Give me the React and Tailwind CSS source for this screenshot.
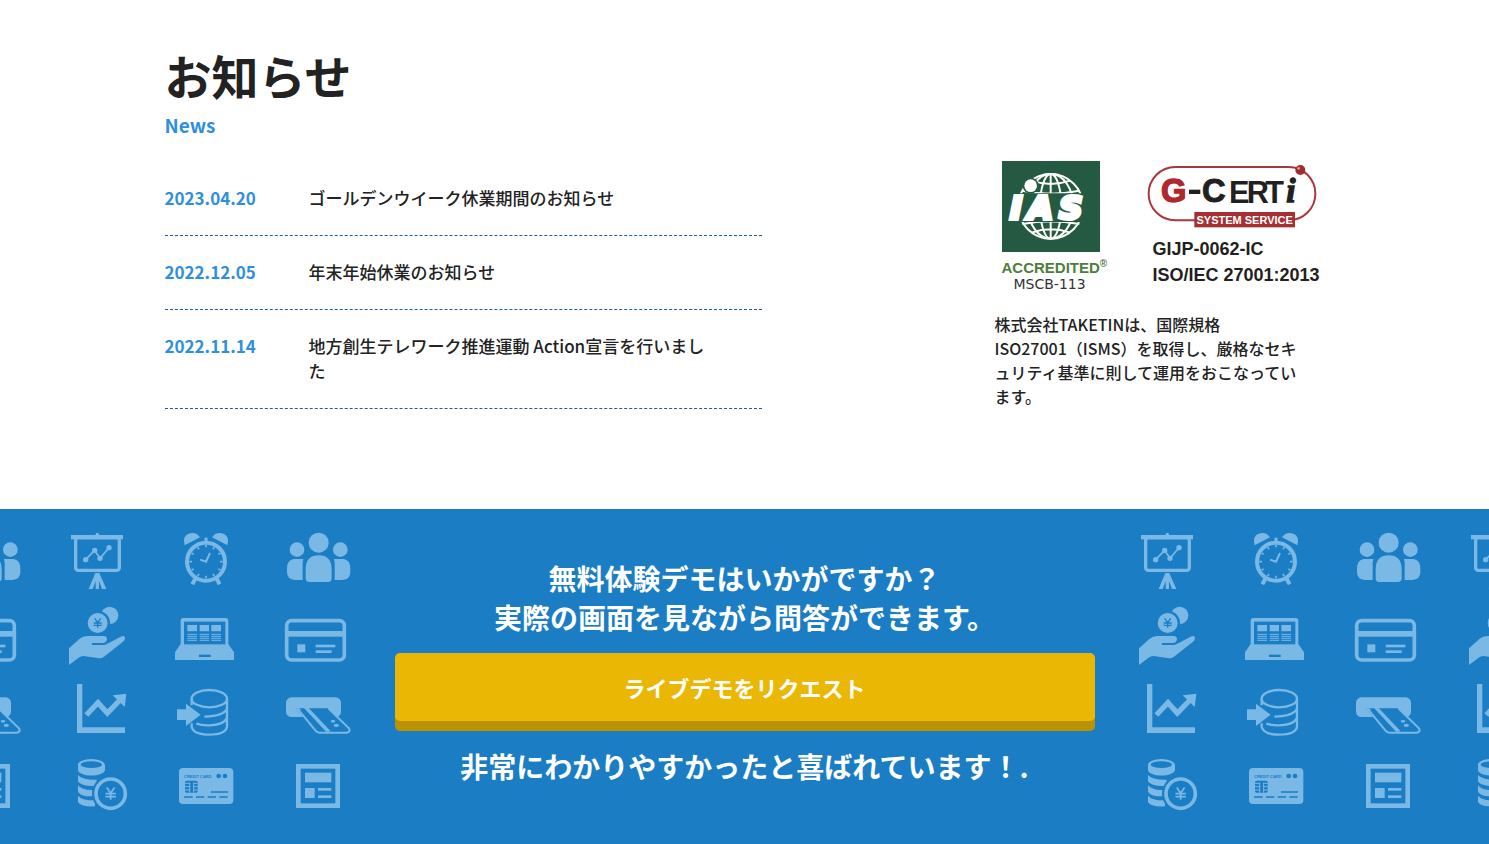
import React from "react";

const news = [
  { date: "2023.04.20", title: "ゴールデンウイーク休業期間のお知らせ" },
  { date: "2022.12.05", title: "年末年始休業のお知らせ" },
  { date: "2022.11.14", title: "地方創生テレワーク推進運動 Action宣言を行いました" },
];

const LIGHT = "#7ab8e6";
const BLUE = "#1b7dc3";

const Yen = ({ x, y, s, color }) => (
  <path
    transform={`translate(${x} ${y}) scale(${s})`}
    d="M-9 -14 L0 -1 L9 -14 M0 -1 V14 M-12 0 H12 M-12 7 H12"
    fill="none"
    stroke={color}
    strokeWidth="4"
  />
);

/* One repeat of the icon wallpaper, 3 columns x 4 rows */
const IconTile = () => (
  <svg
    width="330"
    height="335"
    viewBox="120 0 990 1005"
    fill={LIGHT}
    className="shrink-0"
    aria-hidden="true"
  >
    {/* presentation board */}
    <circle cx="292" cy="76" r="5" />
    <rect x="213" y="78" width="156" height="13" />
    <rect x="227" y="86" width="131" height="98" rx="8" fill="none" stroke={LIGHT} strokeWidth="10" />
    <path d="M257 152 L284 124 L300 148 L327 116" fill="none" stroke={LIGHT} strokeWidth="5" />
    <circle cx="257" cy="152" r="8" />
    <circle cx="284" cy="124" r="8" />
    <circle cx="300" cy="148" r="8" />
    <circle cx="327" cy="116" r="8" />
    <path d="M286 192 H298 L319 240 H306 L297 216 V240 H287 V216 L278 240 H266 Z" />

    {/* hand with coins */}
    <circle cx="329" cy="319" r="26" />
    <circle cx="293" cy="342" r="37" fill={BLUE} />
    <circle cx="293" cy="342" r="30" />
    <Yen x={293} y={342} s={1} color={BLUE} />
    <path d="M207 418 L238 390 Q248 381 262 381 H312 Q321 382 321 391 Q321 397 316 401 L325 403 L362 383 Q375 378 375 388 Q375 394 369 398 L312 443 Q303 450 292 447 L250 441 Q242 441 236 446 L207 468 Z" />
    <path d="M278 405 H309 Q320 405 324 396" fill="none" stroke={BLUE} strokeWidth="6" strokeLinecap="round" />

    {/* line chart */}
    <g transform="translate(0 501)">
      <path d="M231 24 H247 V154 H375 V171 H231 Z" />
      <path d="M259 117 L294 80 L322 111 L360 72" fill="none" stroke={LIGHT} strokeWidth="16" />
      <path d="M379 53 L338 58 L374 93 Z" />
    </g>

    {/* coin stack */}
    <g transform="translate(0 501)">
      <path d="M234 266 V282 C236 304 312 304 315 282 V266 Z" />
      <ellipse cx="274" cy="266" rx="40" ry="17" />
      <ellipse cx="274" cy="266" rx="32" ry="10" fill={BLUE} />
      <path d="M234 297 Q246 312 290 311 V330 Q242 332 234 316 Z" />
      <path d="M234 328 Q246 343 278 342 V361 Q242 362 234 347 Z" />
      <path d="M234 359 Q246 374 285 373 V391 Q242 393 234 378 Z" />
      <circle cx="332" cy="353" r="56" fill={BLUE} />
      <circle cx="332" cy="353" r="44" fill="none" stroke={LIGHT} strokeWidth="11" />
      <Yen x={332} y={353} s={1.3} color={LIGHT} />
    </g>

    <g transform="translate(495 0)">
      {/* alarm clock */}
      <circle cx="123" cy="158" r="57" fill="none" stroke={LIGHT} strokeWidth="12" />
      <path d="M59 109 Q51 84 69 75 Q92 65 105 85 Z" />
      <path d="M187 109 Q195 84 177 75 Q154 65 141 85 Z" />
      <path d="M123 86 V104" stroke={LIGHT} strokeWidth="9" />
      <path d="M92 208 L82 226 M154 208 L164 226" stroke={LIGHT} strokeWidth="12" />
      <path
        d="M123 108 V115 M123 200 V208 M73 158 H81 M165 158 H173 M98 115 L102 121 M148 115 L144 121 M80 133 L86 136 M166 133 L160 136 M80 183 L86 180 M166 183 L160 180 M98 201 L102 195 M148 201 L144 195"
        stroke={LIGHT}
        strokeWidth="5"
      />
      <path d="M105 152 L123 158 L135 132" fill="none" stroke={LIGHT} strokeWidth="6" />

      {/* people */}
      <circle cx="461" cy="101" r="30" />
      <circle cx="396" cy="122" r="22" />
      <circle cx="526" cy="122" r="22" />
      <path d="M422 178 Q424 139 461 139 Q498 139 500 178 V208 Q500 219 489 219 H433 Q422 219 422 208 Z" />
      <path d="M386 150 H415 Q412 160 413 175 V213 H390 Q366 212 366 190 V178 Q366 154 386 150 Z" />
      <path d="M536 150 H507 Q510 160 509 175 V213 H532 Q556 212 556 190 V178 Q556 154 536 150 Z" />

      {/* laptop */}
      <path d="M55 327 H182 Q190 327 190 335 V405 L207 430 V453 H30 V430 L47 405 V335 Q47 327 55 327 Z" />
      <rect x="57" y="338" width="124" height="68" fill={BLUE} />
      <rect x="102" y="437" width="35" height="7" fill={BLUE} />
      <path d="M67 348 H96 V367 H67 Z M104 348 H132 V367 H104 Z M139 348 H168 V367 H139 Z" />
      <path
        d="M67 376 H96 M104 376 H132 M139 376 H168 M67 382 H96 M104 382 H132 M139 382 H168 M67 388 H96 M104 388 H132 M139 388 H168 M67 394 H96 M104 394 H132 M139 394 H168"
        stroke={LIGHT}
        strokeWidth="3"
      />

      {/* outlined card */}
      <rect x="365" y="335" width="173" height="118" rx="15" fill="none" stroke={LIGHT} strokeWidth="11" />
      <rect x="365" y="366" width="173" height="17" />
      <rect x="397" y="406" width="24" height="24" />
      <rect x="452" y="407" width="59" height="8" />
      <rect x="452" y="424" width="48" height="8" />
    </g>

    <g transform="translate(495 501)">
      {/* database import */}
      <g fill="none" stroke={LIGHT} strokeWidth="7">
        <ellipse cx="133" cy="68" rx="53" ry="26" />
        <path d="M80 68 V88 M186 68 V152 Q182 176 133 176 Q86 176 80 153 V142" />
        <path d="M118 122 Q178 120 186 97" />
        <path d="M94 143 Q112 149 133 148 Q178 147 186 125" />
      </g>
      <path d="M36 100 H63 V83 L107 116 L63 150 V132 H36 Z" />

      {/* card in a slot */}
      <rect x="363" y="64" width="165" height="59" rx="16" />
      <path d="M393 97 H491 L553 156 Q560 170 544 171 H462 Q454 171 449 166 Z" fill={BLUE} />
      <path d="M397 97 L451 163 Q456 170 464 170 H545 Q558 168 552 157 L490 97" fill="none" stroke={LIGHT} strokeWidth="6" />
      <path d="M393 97 L410 99 L398 104 Z M417 96 L431 96 L497 166 L484 168 Z" />
      <ellipse cx="504" cy="136" rx="7" ry="4" />
      <ellipse cx="514" cy="148" rx="8" ry="5" />

      {/* filled credit card */}
      <rect x="42" y="276" width="163" height="108" rx="12" />
      <text x="57" y="305" fill={BLUE} fontSize="12" fontWeight="700" fontFamily="'Liberation Sans', sans-serif">
        CREDIT CARD
      </text>
      <circle cx="161" cy="300" r="7" fill={BLUE} />
      <circle cx="180" cy="300" r="7" fill={BLUE} />
      <rect x="60" y="314" width="38" height="36" rx="5" fill={BLUE} />
      <path d="M60 322 H76 M60 332 H76 M60 342 H76 M84 322 H98 M84 332 H98 M84 342 H98 M74 320 V350 M86 320 V350" stroke={LIGHT} strokeWidth="3" />
      <path d="M138 348 H189 M57 363 H83 M93 363 H118 M128 363 H153 M163 363 H188" stroke={BLUE} strokeWidth="5" />

      {/* article */}
      <rect x="400" y="271" width="118" height="118" fill="none" stroke={LIGHT} strokeWidth="14" />
      <rect x="420" y="290" width="79" height="29" />
      <rect x="420" y="336" width="29" height="30" />
      <rect x="459" y="336" width="40" height="8" />
      <rect x="459" y="358" width="40" height="8" />
    </g>
  </svg>
);

const IasLogo = () => (
  <svg width="98" height="91" viewBox="36 33 294 273" role="img" aria-label="IAS">
    <rect x="36" y="33" width="294" height="273" fill="#245a41" />
    <g fill="none" stroke="#fff" strokeWidth="6">
      <circle cx="182" cy="169" r="97" />
      <ellipse cx="182" cy="169" rx="68" ry="97" />
      <ellipse cx="182" cy="169" rx="32" ry="97" />
      <path d="M182 72 V266 M125 92 Q182 112 240 92 M97 122 Q182 140 268 122 M97 222 Q182 206 268 222 M125 248 Q182 228 240 248" />
    </g>
    <path d="M74 130 H322 L292 216 H48 Z" fill="#245a41" />
    <circle cx="122" cy="107" r="24" fill="#245a41" />
    <text
      x="60 113 207"
      y="206"
      fill="#fff"
      stroke="#fff"
      strokeWidth="12"
      fontSize="98"
      fontWeight="700"
      fontStyle="italic"
      fontFamily="'DejaVu Sans', sans-serif"
    >
      IAS
    </text>
    <circle cx="122" cy="107" r="19" fill="#fff" />
  </svg>
);

const GcertiLogo = () => (
  <svg width="172" height="65" viewBox="35 40 516 195" role="img" aria-label="G-CERTi SYSTEM SERVICE">
    <rect x="43" y="49" width="500" height="160" rx="80" fill="#fff" stroke="#a8383b" strokeWidth="6" />
    <g fontFamily="'Liberation Sans', Arial, sans-serif" fontWeight="700" fontSize="98">
      <text x="80" y="154" fill="#b0282d" stroke="#b0282d" strokeWidth="4">G</text>
      <path d="M164 117 H198 V130 H164 Z" fill="#231f20" />
      <text x="203" y="154" fill="#231f20" stroke="#231f20" strokeWidth="3">C</text>
      <text x="284 337 393" y="156" fill="#231f20" fontSize="92">ERT</text>
      <text x="456" y="154" fill="#231f20" stroke="#231f20" strokeWidth="4" fontStyle="italic" fontSize="100" fontFamily="'Liberation Serif', serif">
        i
      </text>
    </g>
    <rect x="180" y="184" width="302" height="46" fill="#a52f33" />
    <text
      x="331"
      y="219"
      textAnchor="middle"
      fill="#fff"
      fontSize="33"
      fontWeight="700"
      fontFamily="'Liberation Sans', Arial, sans-serif"
    >
      SYSTEM SERVICE
    </text>
    <circle cx="498" cy="58" r="15" fill="#a32a2e" />
    <circle cx="493" cy="53" r="4" fill="#dba0a0" />
  </svg>
);

const NewsSection = () => (
  <section className="mx-auto flex max-w-[1160px] items-start justify-between pt-12 pb-[100px]">
    <div className="w-[597px]">
      <h2 className="text-[47px] leading-[54px] font-bold">お知らせ</h2>
      <p className="mt-[11px] text-[19px] leading-6 font-bold text-[#2e8fe0]">News</p>
      <ul className="mt-[25px]">
        {news.map((item) => (
          <li key={item.date} className="border-b border-dashed border-[#2d5696] pt-[23px] pb-[25px]">
            <a href="#news" className="flex text-[17px] leading-[25px]">
              <time className="w-36 shrink-0 font-bold text-[#2e8fe0]">{item.date}</time>
              <span className="flex-1 pr-12 font-medium">{item.title}</span>
            </a>
          </li>
        ))}
      </ul>
    </div>

    <aside className="mt-[113px] w-[330px]">
      <div className="flex justify-between pr-[5px] pl-[7px]">
        <div className="flex flex-col">
          <IasLogo />
          <p className="mt-1 flex items-start font-['Liberation_Sans',Arial,sans-serif] text-[15px] leading-6 font-bold text-[#4f7d3c]">
            ACCREDITED
            <sup className="top-0 text-[10px] leading-4">®</sup>
          </p>
          <p className="-mt-1 pl-3 font-['DejaVu_Sans',sans-serif] text-[14px] leading-4 text-[#333]">
            MSCB-113
          </p>
        </div>
        <div className="pt-[3px]">
          <GcertiLogo />
          <div className="mt-[7px] pl-1.5 font-['Liberation_Sans',Arial,sans-serif] text-lg leading-[26px] font-bold whitespace-nowrap text-[#231f20]">
            <p>GIJP-0062-IC</p>
            <p>ISO/IEC 27001:2013</p>
          </div>
        </div>
      </div>
      <p className="mt-5 pr-4 text-base leading-6 font-medium">
        株式会社TAKETINは、国際規格
        <br />
        ISO27001（ISMS）を取得し、厳格なセキュリティ基準に則して運用をおこなっています。
      </p>
    </aside>
  </section>
);

const DemoSection = () => (
  <section className="flex bg-[#1b7dc3] text-white">
    <div className="min-w-0 flex-1 overflow-hidden">
      <div className="flex justify-end pr-[25px]">
        <IconTile />
        <IconTile />
      </div>
    </div>
    <div className="w-[700px] pt-[50px] text-center text-[28px] leading-[39px] font-bold">
      <h2>
        無料体験デモはいかがですか？
        <br />
        実際の画面を見ながら問答ができます。
      </h2>
      <a
        href="#demo"
        className="mt-4 mb-[26px] flex h-[68px] items-center justify-center rounded-[5px] bg-[#ebb705] text-[22px] shadow-[0_10px_0_#bb9200]"
      >
        ライブデモをリクエスト
      </a>
      <p>非常にわかりやすかったと喜ばれています！.</p>
    </div>
    <div className="min-w-0 flex-1 overflow-hidden">
      <div className="flex pl-[15px]">
        <IconTile />
        <IconTile />
      </div>
    </div>
  </section>
);

const App = () => {
  return (
    <main lang="ja" className="bg-white font-['Noto_Sans_CJK_JP',sans-serif] text-[#222]">
      <NewsSection />
      <DemoSection />
    </main>
  );
};

export default App;
